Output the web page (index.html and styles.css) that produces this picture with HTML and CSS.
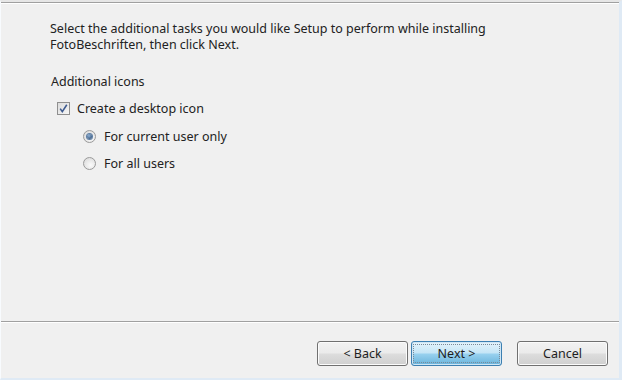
FILE: index.html
```html
<!DOCTYPE html>
<html>
<head>
<meta charset="utf-8">
<link rel="stylesheet" href="styles.css">
</head>
<body>
<div class="window">
  <div class="main">
    <p class="intro"><span class="line">Select the additional tasks you would like Setup to perform while installing</span><span class="line">FotoBeschriften, then click Next.</span></p>
    <div class="group">Additional icons</div>
    <label class="row check-row">
      <span class="checkbox"><svg width="9" height="9" viewBox="0 0 9 9"><path d="M1.2 4.6 L3.3 7.6 L7.8 0.8" fill="none" stroke="#3d5a8f" stroke-width="1.6"/></svg></span>
      <span>Create a desktop icon</span>
    </label>
    <label class="row radio-row first">
      <span class="radio checked"><span class="dot"></span></span>
      <span>For current user only</span>
    </label>
    <label class="row radio-row">
      <span class="radio"></span>
      <span>For all users</span>
    </label>
  </div>
  <div class="footer">
    <button class="btn">&lt; Back</button>
    <button class="btn default"><span class="focus">Next &gt;</span></button>
    <button class="btn cancel">Cancel</button>
  </div>
</div>
</body>
</html>
```
FILE: styles.css
```css
html, body {
  margin: 0;
  padding: 0;
  width: 622px;
  height: 380px;
  overflow: hidden;
  background: #f0f0f0;
}
.window {
  box-sizing: border-box;
  width: 622px;
  height: 380px;
  display: flex;
  flex-direction: column;
  background: #f0f0f0;
  border-top: 2px solid #e6e6e6;
  border-left: 1px solid #f8fbfe;
  border-right: 3px solid #dfeaf5;
  border-bottom: 2px solid #dfeaf5;
  font-family: "Noto Sans", "Open Sans", sans-serif;
  font-size: 12.5px;
  color: #222222;
}
.main {
  flex: 1;
  border-top: 1px solid #a0a0a0;
  box-shadow: inset 0 1px 0 #ffffff;
  padding: 0 0 0 49px;
}
.intro {
  margin: 18px 0 0 0;
  line-height: 16px;
}
.intro .line {
  display: block;
}
.group {
  margin-top: 21px;
  line-height: 15px;
  margin-left: 1px;
}
.row {
  display: flex;
  align-items: center;
  gap: 7px;
  height: 15px;
  line-height: 15px;
}
.check-row {
  margin-top: 12px;
  margin-left: 7px;
}
.radio-row {
  margin-top: 12px;
  margin-left: 33px;
  gap: 8px;
}
.radio-row.first {
  margin-top: 13px;
}
.checkbox {
  box-sizing: border-box;
  width: 13px;
  height: 13px;
  border: 1px solid #8f8f8f;
  background: linear-gradient(135deg, #dcdcdc, #f6f6f6);
  display: flex;
  align-items: center;
  justify-content: center;
}
.radio {
  box-sizing: border-box;
  width: 13px;
  height: 13px;
  border-radius: 50%;
  border: 1px solid #9a9a9a;
  background: radial-gradient(circle at 60% 65%, #fbfbfb, #d6d6d6);
  display: flex;
  align-items: center;
  justify-content: center;
}
.radio .dot {
  width: 5px;
  height: 5px;
  border-radius: 50%;
  background: radial-gradient(circle at 40% 35%, #8fb2d8, #1c3d63);
  box-shadow: 0 0 0 1px #5f7fa5;
}
.footer {
  box-sizing: border-box;
  height: 57px;
  border-top: 1px solid #a0a0a0;
  box-shadow: inset 0 1px 0 #ffffff;
  display: flex;
  align-items: flex-start;
  padding: 19px 11px 0 0;
  justify-content: flex-end;
}
.btn {
  box-sizing: border-box;
  width: 91px;
  height: 25px;
  margin: 0 0 0 3px;
  padding: 0;
  border: 1px solid #707070;
  border-radius: 3px;
  background: linear-gradient(#f2f2f2 0%, #ebebeb 48%, #dddddd 52%, #cfcfcf 100%);
  box-shadow: inset 0 0 0 1px #fbfbfb;
  font-family: "Noto Sans", "Open Sans", sans-serif;
  font-size: 12.5px;
  color: #1e1e1e;
}
.btn.default {
  border-color: #3c7fb1;
  background: linear-gradient(#e5f4fc 0%, #c4e5f6 48%, #98d1ef 52%, #68b3db 100%);
  box-shadow: inset 0 0 0 1px #cfe6f5;
}
.btn.default .focus {
  display: block;
  margin: 2px;
  height: 17px;
  line-height: 17px;
  outline: 1px dotted #7a8a99;
  outline-offset: 0;
}
.btn.cancel {
  margin-left: 15px;
}
```
